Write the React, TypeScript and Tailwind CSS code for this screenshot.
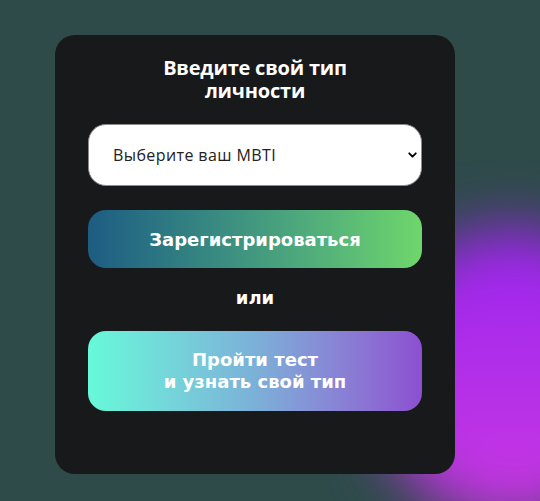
import { ChevronDown } from 'lucide-react';

export default function App() {
  return (
    <div className="relative w-full h-[501px] overflow-hidden bg-[#2e4b4a] font-['Open_Sans',sans-serif]">
      {/* purple blob */}
      <div className="absolute left-[378px] top-[228px] w-[270px] h-[295px] rounded-full bg-gradient-to-b from-[#9a22ee] to-[#cc36e2] blur-[30px]" />

      <div className="relative pt-[35px] pl-[55px]">
        <div className="w-[400px] h-[439px] rounded-[20px] bg-[#18191b] flex flex-col items-center pt-[21px] px-[33px]">
          <h2 className="text-white font-bold text-[20px] leading-[23px] text-center w-[220px] tracking-[-0.2px]">
            Введите свой тип личности
          </h2>

          <div className="relative mt-[22px] w-full">
            <select
              className="appearance-none w-full h-[62px] rounded-[18px] bg-white border border-[#8a8a8a] pl-[24px] pr-10 text-[16px] tracking-[0.4px] text-[#222] font-['Open_Sans',sans-serif] outline-none"
              defaultValue=""
            >
              <option value="">Выберите ваш MBTI</option>
            </select>
            <ChevronDown size={13} strokeWidth={3.5} className="absolute right-[3px] top-1/2 -translate-y-1/2 text-black pointer-events-none" />
          </div>

          <button className="mt-[24px] w-full h-[58px] rounded-[18px] bg-gradient-to-r from-[#1e5c82] to-[#6fd66a] text-white font-bold text-[18px] font-['DejaVu_Sans',sans-serif]">
            Зарегистрироваться
          </button>

          <p className="mt-[19px] text-white font-bold text-[18px] leading-[22px] font-['DejaVu_Sans',sans-serif]">или</p>

          <button className="mt-[22px] w-full h-[80px] rounded-[18px] bg-gradient-to-r from-[#66f9d9] via-[#7bb0d8] to-[#8c4fd0] text-white font-bold text-[18px] leading-[22px] font-['DejaVu_Sans',sans-serif]">
            Пройти тест
            <br />
            и узнать свой тип
          </button>
        </div>
      </div>
    </div>
  );
}
